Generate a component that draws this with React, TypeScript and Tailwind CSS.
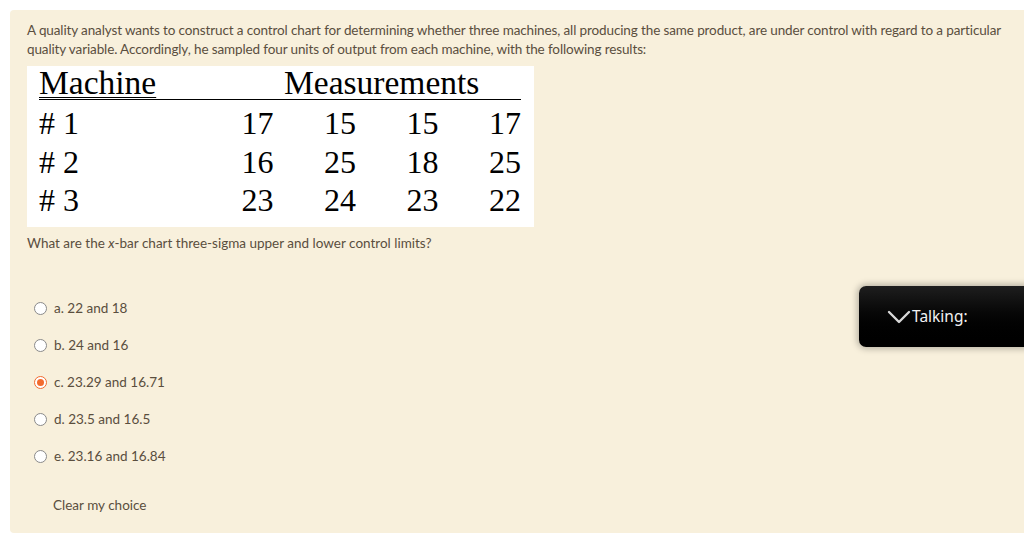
import React from "react";

const rows = [
  ["# 1", "17", "15", "15", "17"],
  ["# 2", "16", "25", "18", "25"],
  ["# 3", "23", "24", "23", "22"],
];

const options = [
  { label: "a. 22 and 18", checked: false },
  { label: "b. 24 and 16", checked: false },
  { label: "c. 23.29 and 16.71", checked: true },
  { label: "d. 23.5 and 16.5", checked: false },
  { label: "e. 23.16 and 16.84", checked: false },
];

function Radio({ checked }: { checked: boolean }) {
  return checked ? (
    <span className="flex h-[13px] w-[13px] items-center justify-center rounded-full border border-[#f26b2f] bg-white">
      <span className="h-[7px] w-[7px] rounded-full bg-[#f26b2f]" />
    </span>
  ) : (
    <span className="h-[13px] w-[13px] rounded-full border border-[#8a8a8a] bg-white" />
  );
}

export default function App() {
  return (
    <div className="relative h-[534px] w-[1024px] overflow-hidden bg-white" style={{ fontFamily: 'Lato, "Noto Sans", sans-serif' }}>
      <div className="ml-[10px] mt-[10px] h-[523px] rounded-l-[4px] bg-[#f8f0dc] pl-[17px] pr-[4px] pt-[11px] text-[#5a4e3e]">
        <p className="text-[13.5px] leading-[19px] tracking-[-0.12px]">
          A quality analyst wants to construct a control chart for determining whether three machines, all producing the same product, are under control with regard to a particular quality variable. Accordingly, he sampled four units of output from each machine, with the following results:
        </p>
        <div
          className="mt-[7px] w-[507px] bg-white pb-[7px] pl-[12px] pr-[13px] pt-[2px] text-black"
          style={{ fontFamily: '"Liberation Serif", "Times New Roman", serif' }}
        >
          <div className="flex h-[32px] items-end border-b-[1.5px] border-black text-[33.5px] leading-[32px]">
            <span className="w-[245px] underline decoration-1 underline-offset-[3px]">Machine</span>
            <span>Measurements</span>
          </div>
          {rows.map((r) => (
            <div key={r[0]} className="flex h-[38.5px] items-center text-[32px] leading-none [&:nth-child(2)]:mt-[4px]">
              <span className="w-[152px]">{r[0]}</span>
              {r.slice(1).map((v, i) => (
                <span key={i} className="w-[82.5px] text-right">
                  {v}
                </span>
              ))}
            </div>
          ))}
        </div>
        <p className="mt-[7px] text-[13.5px] leading-[19px]">
          What are the <i>x</i>-bar chart three-sigma upper and lower control limits?
        </p>
        <div className="mt-[37px] flex flex-col pl-[7px]">
          {options.map((o) => (
            <div key={o.label} className="flex h-[37px] items-center gap-[7px] text-[13.5px]">
              <Radio checked={o.checked} />
              <span>{o.label}</span>
            </div>
          ))}
        </div>
        <div className="mt-[20px] pl-[26px] text-[13.5px]">Clear my choice</div>
      </div>
      <div className="absolute left-[859px] top-[286px] flex h-[61px] w-[170px] items-center rounded-l-[7px] bg-gradient-to-b from-[#1e1e1e] to-[#000] pl-[28px] text-white shadow-[0_0_6px_2px_rgba(0,0,0,0.25)]">
        <svg width="24" height="14" viewBox="0 0 24 14" fill="none" stroke="#d8d8d8" strokeWidth="2.4" strokeLinecap="round" strokeLinejoin="round">
          <path d="M2 2 L12 12 L22 2" />
        </svg>
        <span className="ml-[1px] text-[15.5px] text-[#f2f2f2]" style={{ fontFamily: '"Noto Sans", sans-serif' }}>Talking:</span>
      </div>
    </div>
  );
}
